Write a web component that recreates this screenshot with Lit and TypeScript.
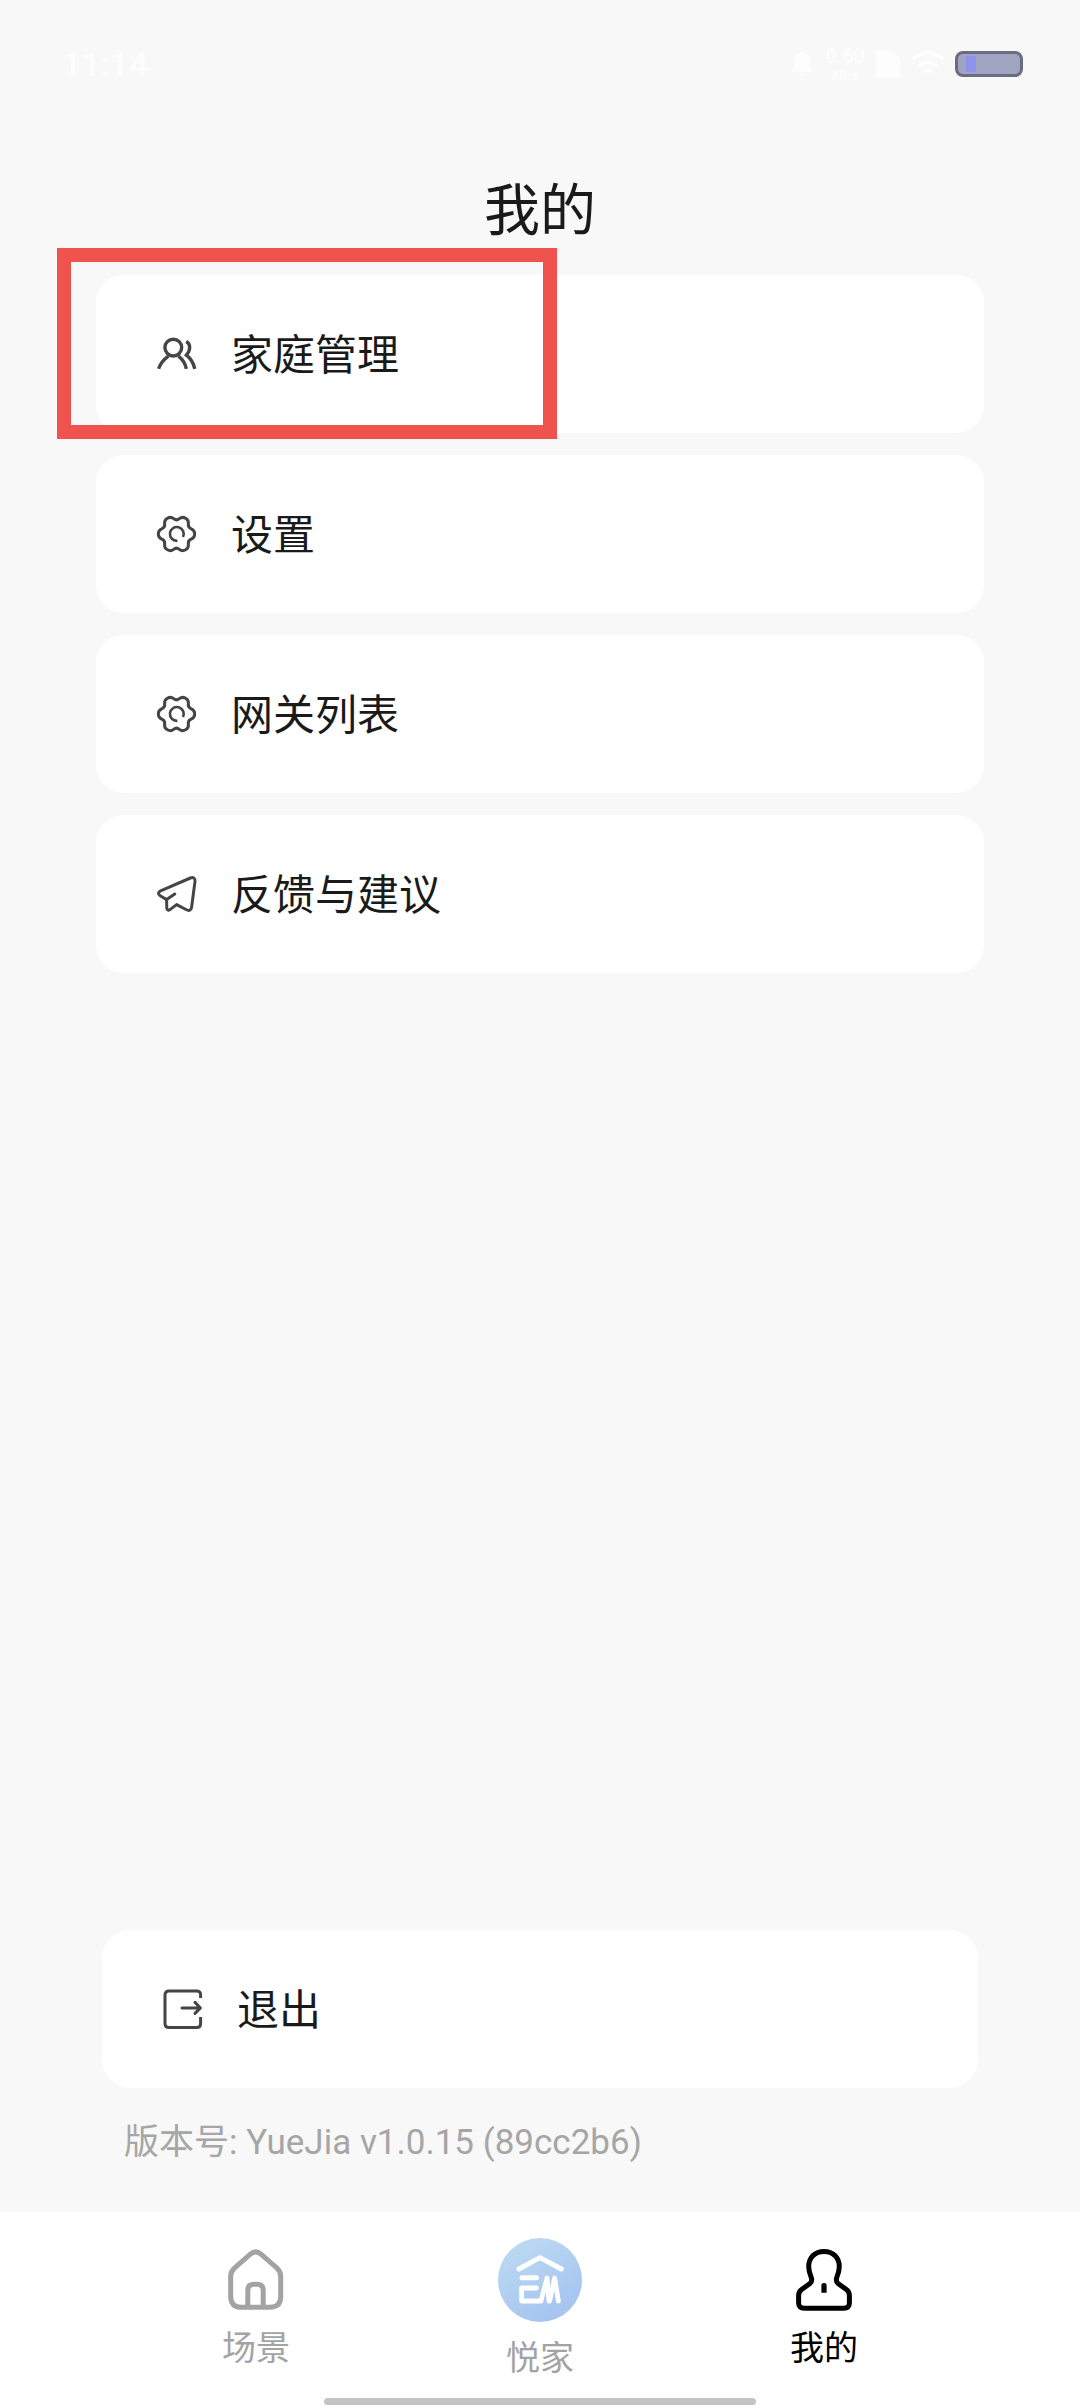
import { LitElement, html, svg, css } from "lit";
import { customElement, property } from "lit/decorators.js";

type IconName = "users" | "gear" | "plane" | "exit" | "home" | "logo" | "person";

// Closed outline with six flat lobes, smoothed through the midpoints of its control points.
function gearOutline(cx: number, cy: number): string {
  const points: number[][] = [];
  for (let k = 0; k < 6; k++) {
    for (const [offset, radius] of [[-12, 18.6], [12, 18.6], [30, 13]]) {
      const angle = ((k * 60 + offset) * Math.PI) / 180;
      points.push([cx + radius * Math.cos(angle), cy + radius * Math.sin(angle)]);
    }
  }
  const mid = (a: number[], b: number[]) =>
    `${((a[0] + b[0]) / 2).toFixed(2)} ${((a[1] + b[1]) / 2).toFixed(2)}`;
  let d = `M${mid(points[points.length - 1], points[0])}`;
  points.forEach((p, i) => {
    d += `Q${p[0].toFixed(2)} ${p[1].toFixed(2)} ${mid(p, points[(i + 1) % points.length])}`;
  });
  return d + "Z";
}

const icons: Record<IconName, { size: number; stroke: number; art: unknown }> = {
  users: {
    size: 40,
    stroke: 3.4,
    art: svg`<circle cx="17.3" cy="13.6" r="8.4"/>
      <path d="M2.6 34.8C4.4 29.5 8 25.4 12.4 22.2M22.4 22.2C26.6 25.4 29.2 29.5 30.4 34.8M30.2 7.4C34.6 9.6 35 15.8 30.4 21.2C34.6 24.4 37.4 29 38.8 34.8"/>`,
  },
  gear: {
    size: 40,
    stroke: 3,
    art: svg`<path d=${gearOutline(20.5, 20)}/>
      <path stroke-width="2.6" d="M27 23A6.9 6.9 0 1 0 21.4 26.8"/>`,
  },
  plane: {
    size: 40,
    stroke: 3,
    art: svg`<path stroke-linejoin="round" d="M10.6 25.6L4.2 21.8C1.8 20.4 2 18 4.6 16.8L34.4 4C37.4 2.8 39.4 4.4 39 7.4L35.6 33.2C35.2 36.2 33 37.2 30.4 35.8L20.6 30.6L14 35.6C12.2 36.8 10.8 36 10.8 34Z"/>
      <path stroke-linecap="round" d="M10.6 25.6L18.8 20"/>`,
  },
  exit: {
    size: 40,
    stroke: 3,
    art: svg`<path d="M38.6 9V6C38.6 3.2 37.2 2 34.6 2H7C4.2 2 3 3.2 3 6V34.4C3 37.2 4.2 38.4 7 38.4H34.6C37.2 38.4 38.6 37.2 38.6 34.4V28"/>
      <path stroke-linecap="round" stroke-linejoin="round" d="M20 19H38M33 13.4L38.4 19L33 24.4"/>`,
  },
  home: {
    size: 64,
    stroke: 5,
    art: svg`<path d="M26.4 6.2Q31.7 1.6 37 6.2L53 20.2Q56.7 23.6 56.7 28.6V48.6Q56.7 59.3 46 59.3H17.4Q6.7 59.3 6.7 48.6V28.6Q6.7 23.6 10.4 20.2Z"/>
      <path d="M23.8 59V42.4Q23.8 36.2 30 36.2H33Q39.2 36.2 39.2 42.4V59"/>`,
  },
  person: {
    size: 64,
    stroke: 5,
    art: svg`<path stroke-linejoin="round" d="M19.2 29.4C17.4 25 16.7 22 16.7 18.6C16.7 9.4 23 3.5 32 3.5C41 3.5 47.3 9.4 47.3 18.6C47.3 22 46.6 25 44.8 29.4C43.8 32 44.2 34 46.4 35.8L54.4 41.6C56.6 43.2 57.4 45 57.4 47.6V54.4C57.4 58.6 55.6 60.2 51.6 60.2H12.4C8.4 60.2 6.6 58.6 6.6 54.4V47.6C6.6 45 7.4 43.2 9.6 41.6L17.6 35.8C19.8 34 20.2 32 19.2 29.4Z"/>
      <path d="M29.4 44.8V37.4Q29.4 35 32 35Q34.6 35 34.6 37.4V44.8Z" fill="currentColor" stroke="none"/>`,
  },
  logo: {
    size: 84,
    stroke: 5,
    art: svg`<defs>
        <linearGradient id="sky" x1="0.2" y1="0" x2="0.8" y2="1">
          <stop offset="0" stop-color="#bddaf2"/>
          <stop offset="1" stop-color="#a3c2ef"/>
        </linearGradient>
      </defs>
      <circle cx="42" cy="42" r="42" fill="url(#sky)" stroke="none"/>
      <g stroke="#fff" stroke-linecap="round" stroke-linejoin="round">
        <path d="M21 31L41.8 19.6L63.4 31"/>
        <path d="M24 39.8H38.4"/>
        <path d="M38.4 50H23.6V63H42" stroke-width="4.8"/>
        <path d="M43 63L49 40L51 63M51.6 63L56.6 40L60.4 63" stroke-width="4.8"/>
      </g>`,
  },
};

@customElement("app-icon")
class AppIcon extends LitElement {
  @property() name: IconName = "gear";

  static styles = css`
    :host {
      display: block;
      flex: none;
    }
    .icon {
      display: block;
      overflow: visible;
    }
  `;

  render() {
    const icon = icons[this.name];
    return html`<svg
      class="icon"
      width=${icon.size}
      height=${icon.size}
      viewBox="0 0 ${icon.size} ${icon.size}"
      fill="none"
      stroke="currentColor"
      stroke-width=${icon.stroke}
      aria-hidden="true"
    >${icon.art}</svg>`;
  }
}

@customElement("status-bar")
class StatusBar extends LitElement {
  static styles = css`
    :host {
      display: flex;
      align-items: center;
      justify-content: space-between;
      height: 40px;
      padding: 44px 57px 44px 62px;
      color: #fdfdfd;
      font-family: Roboto, sans-serif;
      font-weight: 500;
    }
    .clock {
      font-size: 34px;
      line-height: 40px;
    }
    .indicators {
      display: flex;
      align-items: center;
      gap: 10px;
    }
    .speed {
      display: flex;
      flex-direction: column;
      align-items: center;
    }
    .rate {
      font-size: 20px;
      line-height: 24px;
    }
    .unit {
      font-size: 12px;
      line-height: 16px;
    }
    .battery {
      box-sizing: border-box;
      width: 68px;
      height: 26px;
      padding: 2px 8px;
      border: 3px solid #6a6c80;
      border-radius: 8px;
      background: #a0a4c0;
    }
    .charge {
      width: 10px;
      height: 100%;
      background: #9091ee;
    }
  `;

  render() {
    return html`
      <span class="clock">11:14</span>
      <div class="indicators">
        <svg width="26" height="28" viewBox="0 0 26 28" fill="currentColor" aria-hidden="true">
          <path d="M13 2C18 2 21 6 21 11V18L24 22H2L5 18V11C5 6 8 2 13 2ZM10 24H16Q13 28 10 24Z"/>
        </svg>
        <div class="speed"><span class="rate">0.60</span><span class="unit">KB/s</span></div>
        <svg width="26" height="28" viewBox="0 0 26 28" fill="currentColor" aria-hidden="true">
          <path d="M4 0H17L25 9V25Q25 28 22 28H4Q1 28 1 25V3Q1 0 4 0Z"/>
        </svg>
        <svg width="34" height="28" viewBox="0 0 34 28" fill="none" stroke="currentColor" stroke-width="4" aria-hidden="true">
          <path d="M2 9Q17 -3 32 9M8 16Q17 9 26 16M13 22Q17 19 21 22"/>
        </svg>
        <div class="battery"><div class="charge"></div></div>
      </div>
    `;
  }
}

@customElement("menu-card")
class MenuCard extends LitElement {
  @property() icon: IconName = "gear";
  @property() label = "";

  static styles = css`
    :host {
      display: block;
    }
    .card {
      display: flex;
      align-items: center;
      gap: 35px;
      width: 100%;
      padding: 49px 60px;
      border: 0;
      border-radius: 28px;
      background: #fff;
      color: #1a1a1a;
      font: inherit;
      font-size: 42px;
      text-align: left;
    }
    .glyph {
      color: #454545;
    }
    .label {
      padding-bottom: 4px;
      line-height: 56px;
    }
  `;

  render() {
    return html`<button class="card" type="button">
      <app-icon class="glyph" name=${this.icon}></app-icon>
      <span class="label">${this.label}</span>
    </button>`;
  }
}

@customElement("tab-bar")
class TabBar extends LitElement {
  static styles = css`
    :host {
      display: block;
      background: #fff;
    }
    .tabs {
      display: grid;
      grid-template-columns: repeat(3, 1fr);
      align-items: start;
      height: 160px;
      padding: 26px 114px 0;
    }
    .tab {
      display: flex;
      flex-direction: column;
      align-items: center;
      gap: 14px;
      padding: 10px 0 0;
      border: 0;
      background: none;
      color: #a3a3a3;
      font: inherit;
      font-size: 34px;
      line-height: 40px;
    }
    .brand {
      padding: 0;
    }
    .active {
      color: #000;
    }
    .handle {
      width: 40%;
      height: 7px;
      margin: 0 auto 3px;
      border-radius: 4px;
      background: #c4c4c4;
    }
  `;

  render() {
    return html`
      <nav class="tabs">
        <button class="tab" type="button"><app-icon name="home"></app-icon>场景</button>
        <button class="tab brand" type="button"><app-icon name="logo"></app-icon>悦家</button>
        <button class="tab active" type="button" aria-current="page">
          <app-icon name="person"></app-icon>我的
        </button>
      </nav>
      <div class="handle"></div>
    `;
  }
}

@customElement("app-root")
class AppRoot extends LitElement {
  static styles = css`
    :host {
      display: flex;
      flex-direction: column;
      min-height: 100vh;
      background: #f8f8f8;
      font-family: "Noto Sans CJK SC", sans-serif;
    }
    .title {
      margin: 36px 0 27px;
      color: #1a1a1a;
      font-size: 56px;
      font-weight: 400;
      line-height: 84px;
      text-align: center;
    }
    .menu {
      display: grid;
      gap: 22px;
      margin: 0;
      padding: 0 96px;
      list-style: none;
    }
    .entry {
      position: relative;
    }
    .marker {
      position: absolute;
      box-sizing: border-box;
      top: -27px;
      bottom: -6px;
      left: -39px;
      width: 500px;
      border: 14px solid #f0524d;
      pointer-events: none;
    }
    .account {
      margin-top: auto;
      padding: 0 102px;
    }
    .version {
      margin: 31px 22px 45px;
      color: #a6a6a6;
      font-family: Roboto, "Noto Sans CJK SC", sans-serif;
      font-size: 35px;
      line-height: 48px;
    }
  `;

  private entries: { icon: IconName; label: string; marked?: boolean }[] = [
    { icon: "users", label: "家庭管理", marked: true },
    { icon: "gear", label: "设置" },
    { icon: "gear", label: "网关列表" },
    { icon: "plane", label: "反馈与建议" },
  ];

  render() {
    return html`
      <status-bar></status-bar>
      <h1 class="title">我的</h1>
      <ul class="menu">
        ${this.entries.map(
          (entry) => html`<li class="entry">
            <menu-card icon=${entry.icon} label=${entry.label}></menu-card>
            ${entry.marked ? html`<div class="marker"></div>` : null}
          </li>`,
        )}
      </ul>
      <section class="account">
        <menu-card icon="exit" label="退出"></menu-card>
        <p class="version">版本号: YueJia v1.0.15 (89cc2b6)</p>
      </section>
      <tab-bar></tab-bar>
    `;
  }
}
